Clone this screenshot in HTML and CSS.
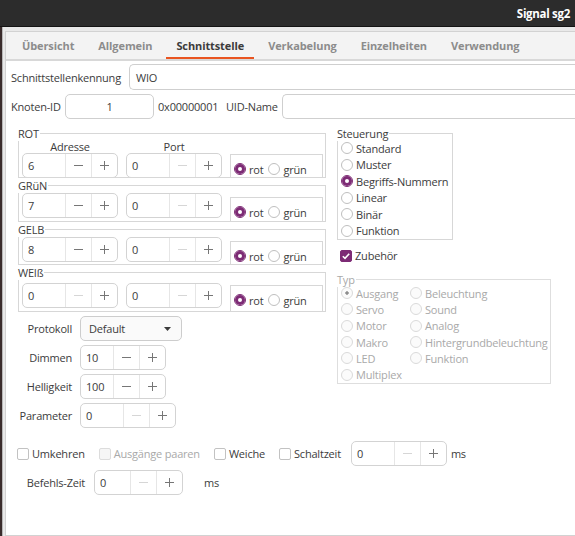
FILE: index.html
```html
<!DOCTYPE html>
<html lang="de">
<head>
    <meta charset="UTF-8">
    <meta name="viewport" content="width=device-width, initial-scale=1.0">
    <title>Signal sg2</title>
    <link rel="stylesheet" href="styles.css">
</head>
<body>
    <div class="titlebar"><span class="title">Signal sg2</span></div>
    <div class="window">
        <div class="notebook">
            <div class="tabs">
                <div class="tab">Übersicht</div>
                <div class="tab">Allgemein</div>
                <div class="tab active">Schnittstelle</div>
                <div class="tab">Verkabelung</div>
                <div class="tab">Einzelheiten</div>
                <div class="tab">Verwendung</div>
            </div>
            <div class="page">
                <div class="row row-iid">
                    <span class="lbl lbl-iid">Schnittstellenkennung</span>
                    <div class="entry entry-wide">WIO</div>
                </div>
                <div class="row row-node">
                    <span class="lbl lbl-node">Knoten-ID</span>
                    <div class="entry entry-node">1</div>
                    <span class="hex">0x00000001</span>
                    <span class="lbl lbl-uid">UID-Name</span>
                    <div class="entry entry-wide"></div>
                </div>

                <div class="columns">
                    <div class="col-left">
                        <div class="group">
                            <div class="group-title"><span>ROT</span></div>
                            <div class="frame frame-rot">
                                <div class="heads"><span>Adresse</span><span>Port</span></div>
                                <div class="frame-row">
                                    <div class="spin"><span class="spin-val">6</span><span class="spin-btn"><svg class="ico" viewBox="0 0 9 9"><path d="M0 4.5h9"/></svg></span><span class="spin-btn"><svg class="ico" viewBox="0 0 9 9"><path d="M0 4.5h9M4.5 0v9"/></svg></span></div>
                                    <div class="spin"><span class="spin-val">0</span><span class="spin-btn off"><svg class="ico" viewBox="0 0 9 9"><path d="M0 4.5h9"/></svg></span><span class="spin-btn"><svg class="ico" viewBox="0 0 9 9"><path d="M0 4.5h9M4.5 0v9"/></svg></span></div>
                                    <div class="radiobox">
                                        <span class="radio"><span class="dot on"></span>rot</span>
                                        <span class="radio"><span class="dot"></span>grün</span>
                                    </div>
                                </div>
                            </div>
                        </div>
                        <div class="group">
                            <div class="group-title"><span>GRüN</span></div>
                            <div class="frame frame-gruen">
                                <div class="frame-row">
                                    <div class="spin"><span class="spin-val">7</span><span class="spin-btn"><svg class="ico" viewBox="0 0 9 9"><path d="M0 4.5h9"/></svg></span><span class="spin-btn"><svg class="ico" viewBox="0 0 9 9"><path d="M0 4.5h9M4.5 0v9"/></svg></span></div>
                                    <div class="spin"><span class="spin-val">0</span><span class="spin-btn off"><svg class="ico" viewBox="0 0 9 9"><path d="M0 4.5h9"/></svg></span><span class="spin-btn"><svg class="ico" viewBox="0 0 9 9"><path d="M0 4.5h9M4.5 0v9"/></svg></span></div>
                                    <div class="radiobox">
                                        <span class="radio"><span class="dot on"></span>rot</span>
                                        <span class="radio"><span class="dot"></span>grün</span>
                                    </div>
                                </div>
                            </div>
                        </div>
                        <div class="group">
                            <div class="group-title"><span>GELB</span></div>
                            <div class="frame frame-gelb">
                                <div class="frame-row">
                                    <div class="spin"><span class="spin-val">8</span><span class="spin-btn"><svg class="ico" viewBox="0 0 9 9"><path d="M0 4.5h9"/></svg></span><span class="spin-btn"><svg class="ico" viewBox="0 0 9 9"><path d="M0 4.5h9M4.5 0v9"/></svg></span></div>
                                    <div class="spin"><span class="spin-val">0</span><span class="spin-btn off"><svg class="ico" viewBox="0 0 9 9"><path d="M0 4.5h9"/></svg></span><span class="spin-btn"><svg class="ico" viewBox="0 0 9 9"><path d="M0 4.5h9M4.5 0v9"/></svg></span></div>
                                    <div class="radiobox">
                                        <span class="radio"><span class="dot on"></span>rot</span>
                                        <span class="radio"><span class="dot"></span>grün</span>
                                    </div>
                                </div>
                            </div>
                        </div>
                        <div class="group">
                            <div class="group-title"><span>WEIß</span></div>
                            <div class="frame frame-weiss">
                                <div class="frame-row">
                                    <div class="spin"><span class="spin-val">0</span><span class="spin-btn off"><svg class="ico" viewBox="0 0 9 9"><path d="M0 4.5h9"/></svg></span><span class="spin-btn"><svg class="ico" viewBox="0 0 9 9"><path d="M0 4.5h9M4.5 0v9"/></svg></span></div>
                                    <div class="spin"><span class="spin-val">0</span><span class="spin-btn off"><svg class="ico" viewBox="0 0 9 9"><path d="M0 4.5h9"/></svg></span><span class="spin-btn"><svg class="ico" viewBox="0 0 9 9"><path d="M0 4.5h9M4.5 0v9"/></svg></span></div>
                                    <div class="radiobox">
                                        <span class="radio"><span class="dot on"></span>rot</span>
                                        <span class="radio"><span class="dot"></span>grün</span>
                                    </div>
                                </div>
                            </div>
                        </div>

                        <div class="form">
                            <div class="form-row">
                                <span class="form-lbl">Protokoll</span>
                                <div class="combo">Default<svg class="arrow" viewBox="0 0 7 4"><path d="M0 0h7L3.5 4z"/></svg></div>
                            </div>
                            <div class="form-row">
                                <span class="form-lbl">Dimmen</span>
                                <div class="spin spin-short"><span class="spin-val">10</span><span class="spin-btn"><svg class="ico" viewBox="0 0 9 9"><path d="M0 4.5h9"/></svg></span><span class="spin-btn"><svg class="ico" viewBox="0 0 9 9"><path d="M0 4.5h9M4.5 0v9"/></svg></span></div>
                            </div>
                            <div class="form-row">
                                <span class="form-lbl">Helligkeit</span>
                                <div class="spin spin-short"><span class="spin-val">100</span><span class="spin-btn"><svg class="ico" viewBox="0 0 9 9"><path d="M0 4.5h9"/></svg></span><span class="spin-btn"><svg class="ico" viewBox="0 0 9 9"><path d="M0 4.5h9M4.5 0v9"/></svg></span></div>
                            </div>
                            <div class="form-row">
                                <span class="form-lbl">Parameter</span>
                                <div class="spin"><span class="spin-val">0</span><span class="spin-btn off"><svg class="ico" viewBox="0 0 9 9"><path d="M0 4.5h9"/></svg></span><span class="spin-btn"><svg class="ico" viewBox="0 0 9 9"><path d="M0 4.5h9M4.5 0v9"/></svg></span></div>
                            </div>
                        </div>
                    </div>

                    <div class="col-right">
                        <div class="group">
                            <div class="group-title"><span>Steuerung</span></div>
                            <div class="frame frame-steuer">
                                <div class="list-item"><span class="dot"></span>Standard</div>
                                <div class="list-item"><span class="dot"></span>Muster</div>
                                <div class="list-item"><span class="dot on"></span>Begriffs-Nummern</div>
                                <div class="list-item"><span class="dot"></span>Linear</div>
                                <div class="list-item"><span class="dot"></span>Binär</div>
                                <div class="list-item"><span class="dot"></span>Funktion</div>
                            </div>
                        </div>
                        <div class="zubehoer">
                            <span class="box checked"><svg viewBox="0 0 12 12"><path d="M2.8 6.2l2.2 2.2 4.2-4.6"/></svg></span>Zubehör
                        </div>
                        <div class="group disabled">
                            <div class="group-title"><span>Typ</span></div>
                            <div class="frame frame-typ">
                                <div class="list-item"><span class="dot sel"></span>Ausgang</div>
                                <div class="list-item"><span class="dot"></span>Beleuchtung</div>
                                <div class="list-item"><span class="dot"></span>Servo</div>
                                <div class="list-item"><span class="dot"></span>Sound</div>
                                <div class="list-item"><span class="dot"></span>Motor</div>
                                <div class="list-item"><span class="dot"></span>Analog</div>
                                <div class="list-item"><span class="dot"></span>Makro</div>
                                <div class="list-item"><span class="dot"></span>Hintergrundbeleuchtung</div>
                                <div class="list-item"><span class="dot"></span>LED</div>
                                <div class="list-item"><span class="dot"></span>Funktion</div>
                                <div class="list-item"><span class="dot"></span>Multiplex</div>
                            </div>
                        </div>
                    </div>
                </div>

                <div class="opts">
                    <span class="check"><span class="box"></span>Umkehren</span>
                    <span class="check disabled"><span class="box"></span>Ausgänge paaren</span>
                    <span class="check"><span class="box"></span>Weiche</span>
                    <span class="check check-last"><span class="box"></span>Schaltzeit</span>
                    <div class="spin"><span class="spin-val">0</span><span class="spin-btn off"><svg class="ico" viewBox="0 0 9 9"><path d="M0 4.5h9"/></svg></span><span class="spin-btn"><svg class="ico" viewBox="0 0 9 9"><path d="M0 4.5h9M4.5 0v9"/></svg></span></div>
                    <span class="unit">ms</span>
                </div>
                <div class="row row-bz">
                    <span class="lbl lbl-bz">Befehls-Zeit</span>
                    <div class="spin spin-bz"><span class="spin-val">0</span><span class="spin-btn off"><svg class="ico" viewBox="0 0 9 9"><path d="M0 4.5h9"/></svg></span><span class="spin-btn"><svg class="ico" viewBox="0 0 9 9"><path d="M0 4.5h9M4.5 0v9"/></svg></span></div>
                    <span class="unit unit-bz">ms</span>
                </div>
            </div>
        </div>
    </div>
</body>
</html>
```

FILE: styles.css
```css
* {
    box-sizing: border-box;
}
body {
    margin: 0;
    width: 575px;
    height: 536px;
    overflow: hidden;
    background: #3a2c2c;
    font-family: "Open Sans", "Noto Sans", sans-serif;
    font-size: 11px;
    letter-spacing: -0.2px;
    color: #3c3c3c;
}

/* window chrome */
.titlebar {
    height: 27px;
    display: flex;
    align-items: center;
    justify-content: flex-end;
    padding-right: 5px;
    background: #2c2c2c;
    border-bottom: 1px solid #141414;
}
.title {
    color: #fff;
    font-weight: bold;
    font-size: 11.5px;
    letter-spacing: -0.3px;
}
.window {
    width: 573px;
    height: 509px;
    margin-left: 2px;
    padding: 4px 0 0 2px;
    background: #e9e9e9;
    border-left: 1px solid #b8b8b8;
}
.notebook {
    height: 100%;
    background: #fff;
    border: 1px solid #d2d2d2;
    border-right: none;
}
.tabs {
    display: flex;
    height: 29px;
    padding-left: 4px;
    background: #f3f3f3;
    border-bottom: 2px solid #d8d8d8;
}
.tab {
    display: flex;
    align-items: center;
    margin: 0 2px;
    padding: 0 10px;
    font-weight: bold;
    letter-spacing: -0.1px;
    color: #8c8c8c;
}
.tab.active {
    color: #3c3c3c;
    box-shadow: inset 0 -2px #e95420;
}

/* page */
.page {
    padding: 3px 0 0 5px;
}
.row {
    display: flex;
    align-items: center;
}
.lbl {
    white-space: nowrap;
}
.row-iid {
    height: 26px;
}
.lbl-iid {
    width: 118px;
}
.row-node {
    height: 25px;
    margin-top: 4px;
}
.lbl-node {
    width: 54px;
}
.entry {
    display: flex;
    align-items: center;
    height: 100%;
    padding: 0 6px;
    background: #fff;
    border: 1px solid #cfcfcf;
    border-radius: 5px;
}
.entry-wide {
    flex: 1;
    border-right: none;
    border-radius: 5px 0 0 5px;
}
.entry-node {
    width: 89px;
    justify-content: center;
}
.hex {
    width: 68px;
    margin-left: 4px;
}
.lbl-uid {
    width: 56px;
}

.columns {
    display: flex;
    gap: 11px;
    margin-top: 8px;
    padding-left: 7px;
}
.col-left {
    width: 308px;
}
.col-right {
    width: 214px;
}

/* framed groups */
.group + .group {
    margin-top: 1px;
}
.group-title {
    height: 13px;
    line-height: 13px;
    margin-bottom: -7px;
}
.group-title span {
    background: #fff;
    padding-right: 1px;
}
.frame {
    border: 1px solid #d7d7d7;
    overflow: hidden;
}
.frame-rot {
    height: 45px;
}
.frame-gruen {
    height: 37px;
    padding-top: 7px;
}
.frame-gelb {
    height: 36px;
    padding-top: 7px;
}
.frame-weiss {
    height: 40px;
    padding-top: 10px;
}
.heads {
    display: flex;
    gap: 8px;
    height: 19px;
    padding: 6px 0 0 3px;
    line-height: 13px;
}
.heads span {
    width: 96px;
    text-align: center;
}
.frame-row {
    display: flex;
    align-items: flex-start;
    gap: 8px;
    padding-left: 3px;
}

/* spin buttons */
.spin {
    display: flex;
    flex: none;
    width: 96px;
    height: 25px;
    background: #fff;
    border: 1px solid #d3d3d3;
    border-radius: 5px;
}
.spin-short {
    width: 86px;
}
.spin-bz {
    width: 89px;
}
.spin-val {
    flex: 1;
    display: flex;
    align-items: center;
    padding-left: 5px;
}
.spin-btn {
    width: 26px;
    display: flex;
    align-items: center;
    justify-content: center;
    border-left: 1px solid #e6e6e6;
}
.ico {
    width: 9px;
    height: 9px;
    fill: none;
    stroke: #767676;
    stroke-width: 1;
}
.spin-btn.off .ico {
    stroke: #d6d6d6;
}

/* radios */
.radiobox {
    display: flex;
    gap: 5px;
    width: 93px;
    height: 30px;
    margin-top: 4px;
    padding: 8px 0 0 3px;
    border: 1px solid #d7d7d7;
}
.frame-rot .radiobox {
    margin-top: 1px;
}
.frame-weiss .radiobox {
    margin-top: 2px;
}
.radio {
    display: flex;
    align-items: center;
    gap: 3px;
    height: 12px;
}
.dot {
    flex: none;
    width: 12px;
    height: 12px;
    background: #fff;
    border: 1px solid #bfbfbf;
    border-radius: 50%;
}
.dot.on {
    border-color: #7d2b75;
    box-shadow: inset 0 0 0 3px #7d2b75;
}
.frame-steuer {
    width: 116px;
    height: 107px;
    padding: 6px 0 0 3px;
}
.list-item {
    display: flex;
    align-items: center;
    gap: 3px;
    height: 16.5px;
    white-space: nowrap;
}
.zubehoer {
    display: flex;
    align-items: center;
    gap: 3px;
    height: 17px;
    margin-top: 7px;
    padding-left: 3px;
}
.group.disabled {
    margin-top: 9px;
    color: #a9a9a9;
}
.frame-typ {
    display: grid;
    grid-template-columns: 69px auto;
    grid-auto-rows: 16.3px;
    height: 105px;
    padding: 5px 0 0 3px;
    border-color: #dedede;
}
.frame-typ .list-item {
    height: auto;
}
.disabled .dot {
    background: #fbfbfb;
    border-color: #dadada;
}
.disabled .dot.sel {
    background: radial-gradient(circle, #8e8e8e 0 1.4px, #fbfbfb 2px);
}

/* check boxes */
.box {
    flex: none;
    width: 12px;
    height: 12px;
    background: #fff;
    border: 1px solid #c2c2c2;
    border-radius: 2px;
}
.box svg {
    display: block;
    width: 12px;
    height: 12px;
    margin: -1px;
    fill: none;
    stroke: #fff;
    stroke-width: 1.6;
}
.box.checked {
    background: #7d2b75;
    border-color: #7d2b75;
}

/* lower form */
.form {
    margin-top: 4px;
}
.form-row {
    display: flex;
    align-items: center;
    height: 25px;
}
.form-row + .form-row {
    margin-top: 4px;
}
.form-lbl {
    width: 54px;
    margin-right: 8px;
    display: flex;
    justify-content: flex-end;
    white-space: nowrap;
}
.combo {
    display: flex;
    align-items: center;
    justify-content: space-between;
    width: 102px;
    height: 100%;
    padding: 0 10px 0 8px;
    background: #fafafa;
    border: 1px solid #cdcdcd;
    border-radius: 5px;
}
.arrow {
    width: 7px;
    height: 4px;
    fill: #3c3c3c;
}
.opts {
    display: flex;
    align-items: center;
    height: 25px;
    margin-top: 13px;
    padding-left: 6px;
}
.check {
    display: flex;
    align-items: center;
    gap: 3px;
    margin-right: 14px;
    white-space: nowrap;
}
.check.disabled {
    color: #a9a9a9;
}
.check.disabled .box {
    background: #f6f6f6;
    border-color: #dcdcdc;
}
.check-last {
    margin-right: 10px;
}
.unit {
    margin-left: 4px;
}
.row-bz {
    height: 25px;
    margin-top: 4px;
}
.lbl-bz {
    width: 74px;
    margin-right: 9px;
    text-align: right;
}
.unit-bz {
    margin-left: 21px;
}
```
